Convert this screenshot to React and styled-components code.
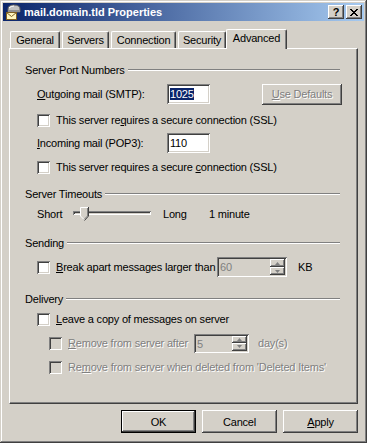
import React from "react";
import styled, { createGlobalStyle, css } from "styled-components";

const GlobalStyle = createGlobalStyle`
  html, body {
    margin: 0;
    padding: 0;
    background: #d4d0c8;
  }
  body {
    font-family: "Liberation Sans", Arial, sans-serif;
    font-size: 11px;
    letter-spacing: -0.2px;
    color: #000;
  }
`;

const raised = css`
  box-shadow: inset -1px -1px #404040, inset 1px 1px #fff,
    inset -2px -2px #808080, inset 2px 2px #d4d0c8;
`;

const sunken = css`
  box-shadow: inset 1px 1px #808080, inset -1px -1px #fff,
    inset 2px 2px #404040, inset -2px -2px #d4d0c8;
`;

const Window = styled.div`
  width: 367px;
  height: 443px;
  box-sizing: border-box;
  padding: 3px;
  background: #d4d0c8;
  box-shadow: inset -1px -1px #404040, inset 1px 1px #d4d0c8,
    inset -2px -2px #808080, inset 2px 2px #fff;
  display: flex;
  flex-direction: column;
`;

const TitleBar = styled.div`
  height: 18px;
  display: flex;
  align-items: center;
  padding: 0 2px 0 2px;
  background: linear-gradient(to right, #0a246a, #a6caf0);
  color: #fff;
  font-weight: bold;
  font-size: 11px;
  letter-spacing: 0;
`;

const TitleText = styled.span`
  margin-left: 3px;
  flex: 1;
  white-space: nowrap;
`;

const CaptionButton = styled.div`
  width: 16px;
  height: 14px;
  box-sizing: border-box;
  background: #d4d0c8;
  ${raised};
  display: flex;
  align-items: center;
  justify-content: center;
  color: #000;
  font-size: 11px;
  font-weight: bold;
  margin-left: ${(p) => p.$ml || 0}px;
`;

const Body = styled.div`
  flex: 1;
  display: flex;
  flex-direction: column;
  padding: 8px 6px 0 6px;
`;

const TabStrip = styled.div`
  height: 19px;
  display: flex;
  align-items: flex-end;
  gap: 2px;
  padding-left: 1px;
  position: relative;
  z-index: 1;
`;

const Tab = styled.div`
  width: ${(p) => p.$w}px;
  height: ${(p) => (p.$active ? 20 : 17)}px;
  margin: ${(p) => (p.$active ? "0 -2px -1px -2px" : "0")};
  box-sizing: border-box;
  background: #d4d0c8;
  border-top: 1px solid #fff;
  border-left: 1px solid #fff;
  border-right: 1px solid #404040;
  border-radius: 2px 2px 0 0;
  box-shadow: inset -1px 0 #808080;
  display: flex;
  justify-content: center;
  align-items: flex-start;
  padding-top: 2px;
  white-space: nowrap;
`;

const Panel = styled.div`
  height: 356px;
  box-sizing: border-box;
  padding: 14px 15px 0 15px;
  border-top: 1px solid #fff;
  border-left: 1px solid #fff;
  border-right: 1px solid #404040;
  border-bottom: 1px solid #404040;
  box-shadow: inset -1px -1px #808080;
  display: flex;
  flex-direction: column;
`;

const GroupHeader = styled.div`
  height: 14px;
  margin-top: ${(p) => p.$mt || 0}px;
  display: flex;
  align-items: center;
  gap: 3px;
  padding-right: 2px;
  white-space: nowrap;
`;

const GroupLine = styled.div`
  flex: 1;
  height: 0;
  border-top: 1px solid #808080;
  border-bottom: 1px solid #fff;
`;

const Row = styled.div`
  height: ${(p) => p.$h}px;
  margin-top: ${(p) => p.$mt}px;
  padding-left: ${(p) => p.$indent}px;
  display: flex;
  align-items: center;
  white-space: nowrap;
`;

const FieldLabel = styled.span`
  width: ${(p) => p.$w}px;
  margin-left: ${(p) => p.$ml || 0}px;
  flex: none;
`;

const Key = styled.span`
  text-decoration: underline;
`;

const TextBox = styled.div`
  width: ${(p) => p.$w}px;
  height: 20px;
  box-sizing: border-box;
  padding: 3px 3px 0 3px;
  background: #fff;
  ${sunken};
  line-height: 14px;
`;

const Selected = styled.span`
  background: #0a246a;
  color: #fff;
`;

const Button = styled.div`
  width: ${(p) => p.$w || 75}px;
  height: ${(p) => p.$h || 23}px;
  box-sizing: border-box;
  flex: none;
  display: flex;
  align-items: center;
  justify-content: center;
  background: #d4d0c8;
  ${raised};
  margin-left: ${(p) => (p.$push ? "auto" : "0")};
  color: ${(p) => (p.$disabled ? "#808080" : "#000")};
  text-shadow: ${(p) => (p.$disabled ? "1px 1px 0 #fff" : "none")};
  ${(p) =>
    p.$default &&
    css`
      box-shadow: inset 0 0 0 1px #000, inset -2px -2px #404040,
        inset 2px 2px #fff, inset -3px -3px #808080;
    `}
`;

const CheckBox = styled.span`
  width: 13px;
  height: 13px;
  box-sizing: border-box;
  flex: none;
  background: ${(p) => (p.$disabled ? "#d4d0c8" : "#fff")};
  ${sunken};
`;

const CheckLabel = styled.span`
  margin-left: 6px;
  width: ${(p) => (p.$w ? `${p.$w}px` : "auto")};
  flex: none;
  color: ${(p) => (p.$disabled ? "#808080" : "#000")};
  text-shadow: ${(p) => (p.$disabled ? "1px 1px 0 #fff" : "none")};
`;

const Spin = styled.div`
  width: ${(p) => p.$w}px;
  height: ${(p) => p.$h}px;
  box-sizing: border-box;
  flex: none;
  padding: 2px;
  background: #d4d0c8;
  ${sunken};
  display: flex;
`;

const SpinValue = styled.div`
  flex: 1;
  padding: 1px 0 0 1px;
  color: #808080;
  line-height: 14px;
`;

const SpinButtons = styled.div`
  width: 15px;
  display: flex;
  flex-direction: column;
`;

const SpinButton = styled.div`
  flex: 1;
  background: #d4d0c8;
  ${raised};
  display: flex;
  align-items: center;
  justify-content: center;
`;

const After = styled.span`
  margin-left: ${(p) => p.$ml}px;
  color: ${(p) => (p.$disabled ? "#808080" : "#000")};
  text-shadow: ${(p) => (p.$disabled ? "1px 1px 0 #fff" : "none")};
`;

const Slider = styled.div`
  width: 78px;
  height: 18px;
  position: relative;
  flex: none;
`;

const Groove = styled.div`
  position: absolute;
  left: 0;
  right: 0;
  top: 6px;
  height: 4px;
  ${sunken};
`;

const Thumb = styled.svg`
  position: absolute;
  left: 7px;
  top: 2px;
`;

const ButtonRow = styled.div`
  display: flex;
  justify-content: flex-end;
  gap: 6px;
  margin-top: 6px;
`;

const SpinArrow = ({ up }) => (
  <svg width="5" height="3" viewBox="0 0 5 3">
    <polygon
      points={up ? "2.5,0 5,3 0,3" : "0,0 5,0 2.5,3"}
      fill="#808080"
    />
  </svg>
);

const SpinBox = ({ w, h, value }) => (
  <Spin $w={w} $h={h}>
    <SpinValue>{value}</SpinValue>
    <SpinButtons>
      <SpinButton>
        <SpinArrow up />
      </SpinButton>
      <SpinButton>
        <SpinArrow />
      </SpinButton>
    </SpinButtons>
  </Spin>
);

const MailIcon = () => (
  <svg width="16" height="16" viewBox="0 0 16 16">
    <path
      d="M3 5 Q3 1 9 1 Q15 1 15 5 L15 8 L3 8 Z"
      fill="#c0c0c0"
      stroke="#606060"
      strokeWidth="1"
    />
    <path d="M4 4 Q6 2 9 2" stroke="#fff" fill="none" />
    <rect x="3" y="6" width="12" height="2" fill="#909090" />
    <rect x="1.5" y="8.5" width="10" height="7" fill="#fff7c0" stroke="#806020" />
    <path d="M1.5 8.5 L6.5 12.5 L11.5 8.5" fill="none" stroke="#806020" />
  </svg>
);

const CloseGlyph = () => (
  <svg width="8" height="7" viewBox="0 0 8 7">
    <path d="M0 0 L7 7 M1 0 L8 7 M7 0 L0 7 M8 0 L1 7" stroke="#000" strokeWidth="1" />
  </svg>
);

const Header = ({ mt, children }) => (
  <GroupHeader $mt={mt}>
    <span>{children}</span>
    <GroupLine />
  </GroupHeader>
);

const tabs = [
  { label: "General", w: 50 },
  { label: "Servers", w: 47 },
  { label: "Connection", w: 65 },
  { label: "Security", w: 48 },
  { label: "Advanced", w: 61, active: true },
];

export default function App() {
  return (
    <>
      <GlobalStyle />
      <Window>
        <TitleBar>
          <MailIcon />
          <TitleText>mail.domain.tld Properties</TitleText>
          <CaptionButton>?</CaptionButton>
          <CaptionButton $ml={2}>
            <CloseGlyph />
          </CaptionButton>
        </TitleBar>
        <Body>
          <TabStrip>
            {tabs.map((t) => (
              <Tab key={t.label} $w={t.w} $active={t.active}>
                {t.label}
              </Tab>
            ))}
          </TabStrip>
          <Panel>
            <Header>Server Port Numbers</Header>
            <Row $h={22} $mt={6} $indent={12}>
              <FieldLabel $w={130}>
                <Key>O</Key>utgoing mail (SMTP):
              </FieldLabel>
              <TextBox $w={43}>
                <Selected>1025</Selected>
              </TextBox>
              <Button $w={80} $h={21} $push $disabled>
                <span>
                  <Key>U</Key>se Defaults
                </span>
              </Button>
            </Row>
            <Row $h={18} $mt={6} $indent={12}>
              <CheckBox />
              <CheckLabel>
                This server re<Key>q</Key>uires a secure connection (SSL)
              </CheckLabel>
            </Row>
            <Row $h={22} $mt={3} $indent={12}>
              <FieldLabel $w={130}>
                <Key>I</Key>ncoming mail (POP3):
              </FieldLabel>
              <TextBox $w={43}>110</TextBox>
            </Row>
            <Row $h={18} $mt={4} $indent={12}>
              <CheckBox />
              <CheckLabel>
                This server requires a secure <Key>c</Key>onnection (SSL)
              </CheckLabel>
            </Row>

            <Header mt={11}>Server Timeouts</Header>
            <Row $h={18} $mt={4} $indent={12}>
              <FieldLabel $w={36}>Short</FieldLabel>
              <Slider>
                <Groove />
                <Thumb width="9" height="14" viewBox="0 0 9 14">
                  <polygon points="0,0 8,0 8,9 4,13 0,9" fill="#d4d0c8" />
                  <polyline points="0.5,9 0.5,0.5 8,0.5" fill="none" stroke="#fff" />
                  <polyline points="8.5,0 8.5,9 4.5,13.5" fill="none" stroke="#404040" />
                  <polyline points="7.5,1 7.5,9 4,12.5" fill="none" stroke="#808080" />
                  <line x1="0.5" y1="9" x2="4" y2="12.5" stroke="#fff" />
                </Thumb>
              </Slider>
              <FieldLabel $w={46} $ml={12}>
                Long
              </FieldLabel>
              <span>1 minute</span>
            </Row>

            <Header mt={13}>Sending</Header>
            <Row $h={22} $mt={6} $indent={12}>
              <CheckBox />
              <CheckLabel $w={161}>
                <Key>B</Key>reak apart messages larger than
              </CheckLabel>
              <SpinBox w={70} h={20} value="60" />
              <After $ml={11}>KB</After>
            </Row>

            <Header mt={14}>Delivery</Header>
            <Row $h={18} $mt={4} $indent={12}>
              <CheckBox />
              <CheckLabel>
                <Key>L</Key>eave a copy of messages on server
              </CheckLabel>
            </Row>
            <Row $h={22} $mt={4} $indent={24}>
              <CheckBox $disabled />
              <CheckLabel $w={126} $disabled>
                <Key>R</Key>emove from server after
              </CheckLabel>
              <SpinBox w={55} h={19} value="5" />
              <After $ml={9} $disabled>
                day(s)
              </After>
            </Row>
            <Row $h={18} $mt={4} $indent={24}>
              <CheckBox $disabled />
              <CheckLabel $disabled>
                Re<Key>m</Key>ove from server when deleted from 'Deleted Items'
              </CheckLabel>
            </Row>
          </Panel>
          <ButtonRow>
            <Button $default>OK</Button>
            <Button>Cancel</Button>
            <Button>
              <span>
                <Key>A</Key>pply
              </span>
            </Button>
          </ButtonRow>
        </Body>
      </Window>
    </>
  );
}
